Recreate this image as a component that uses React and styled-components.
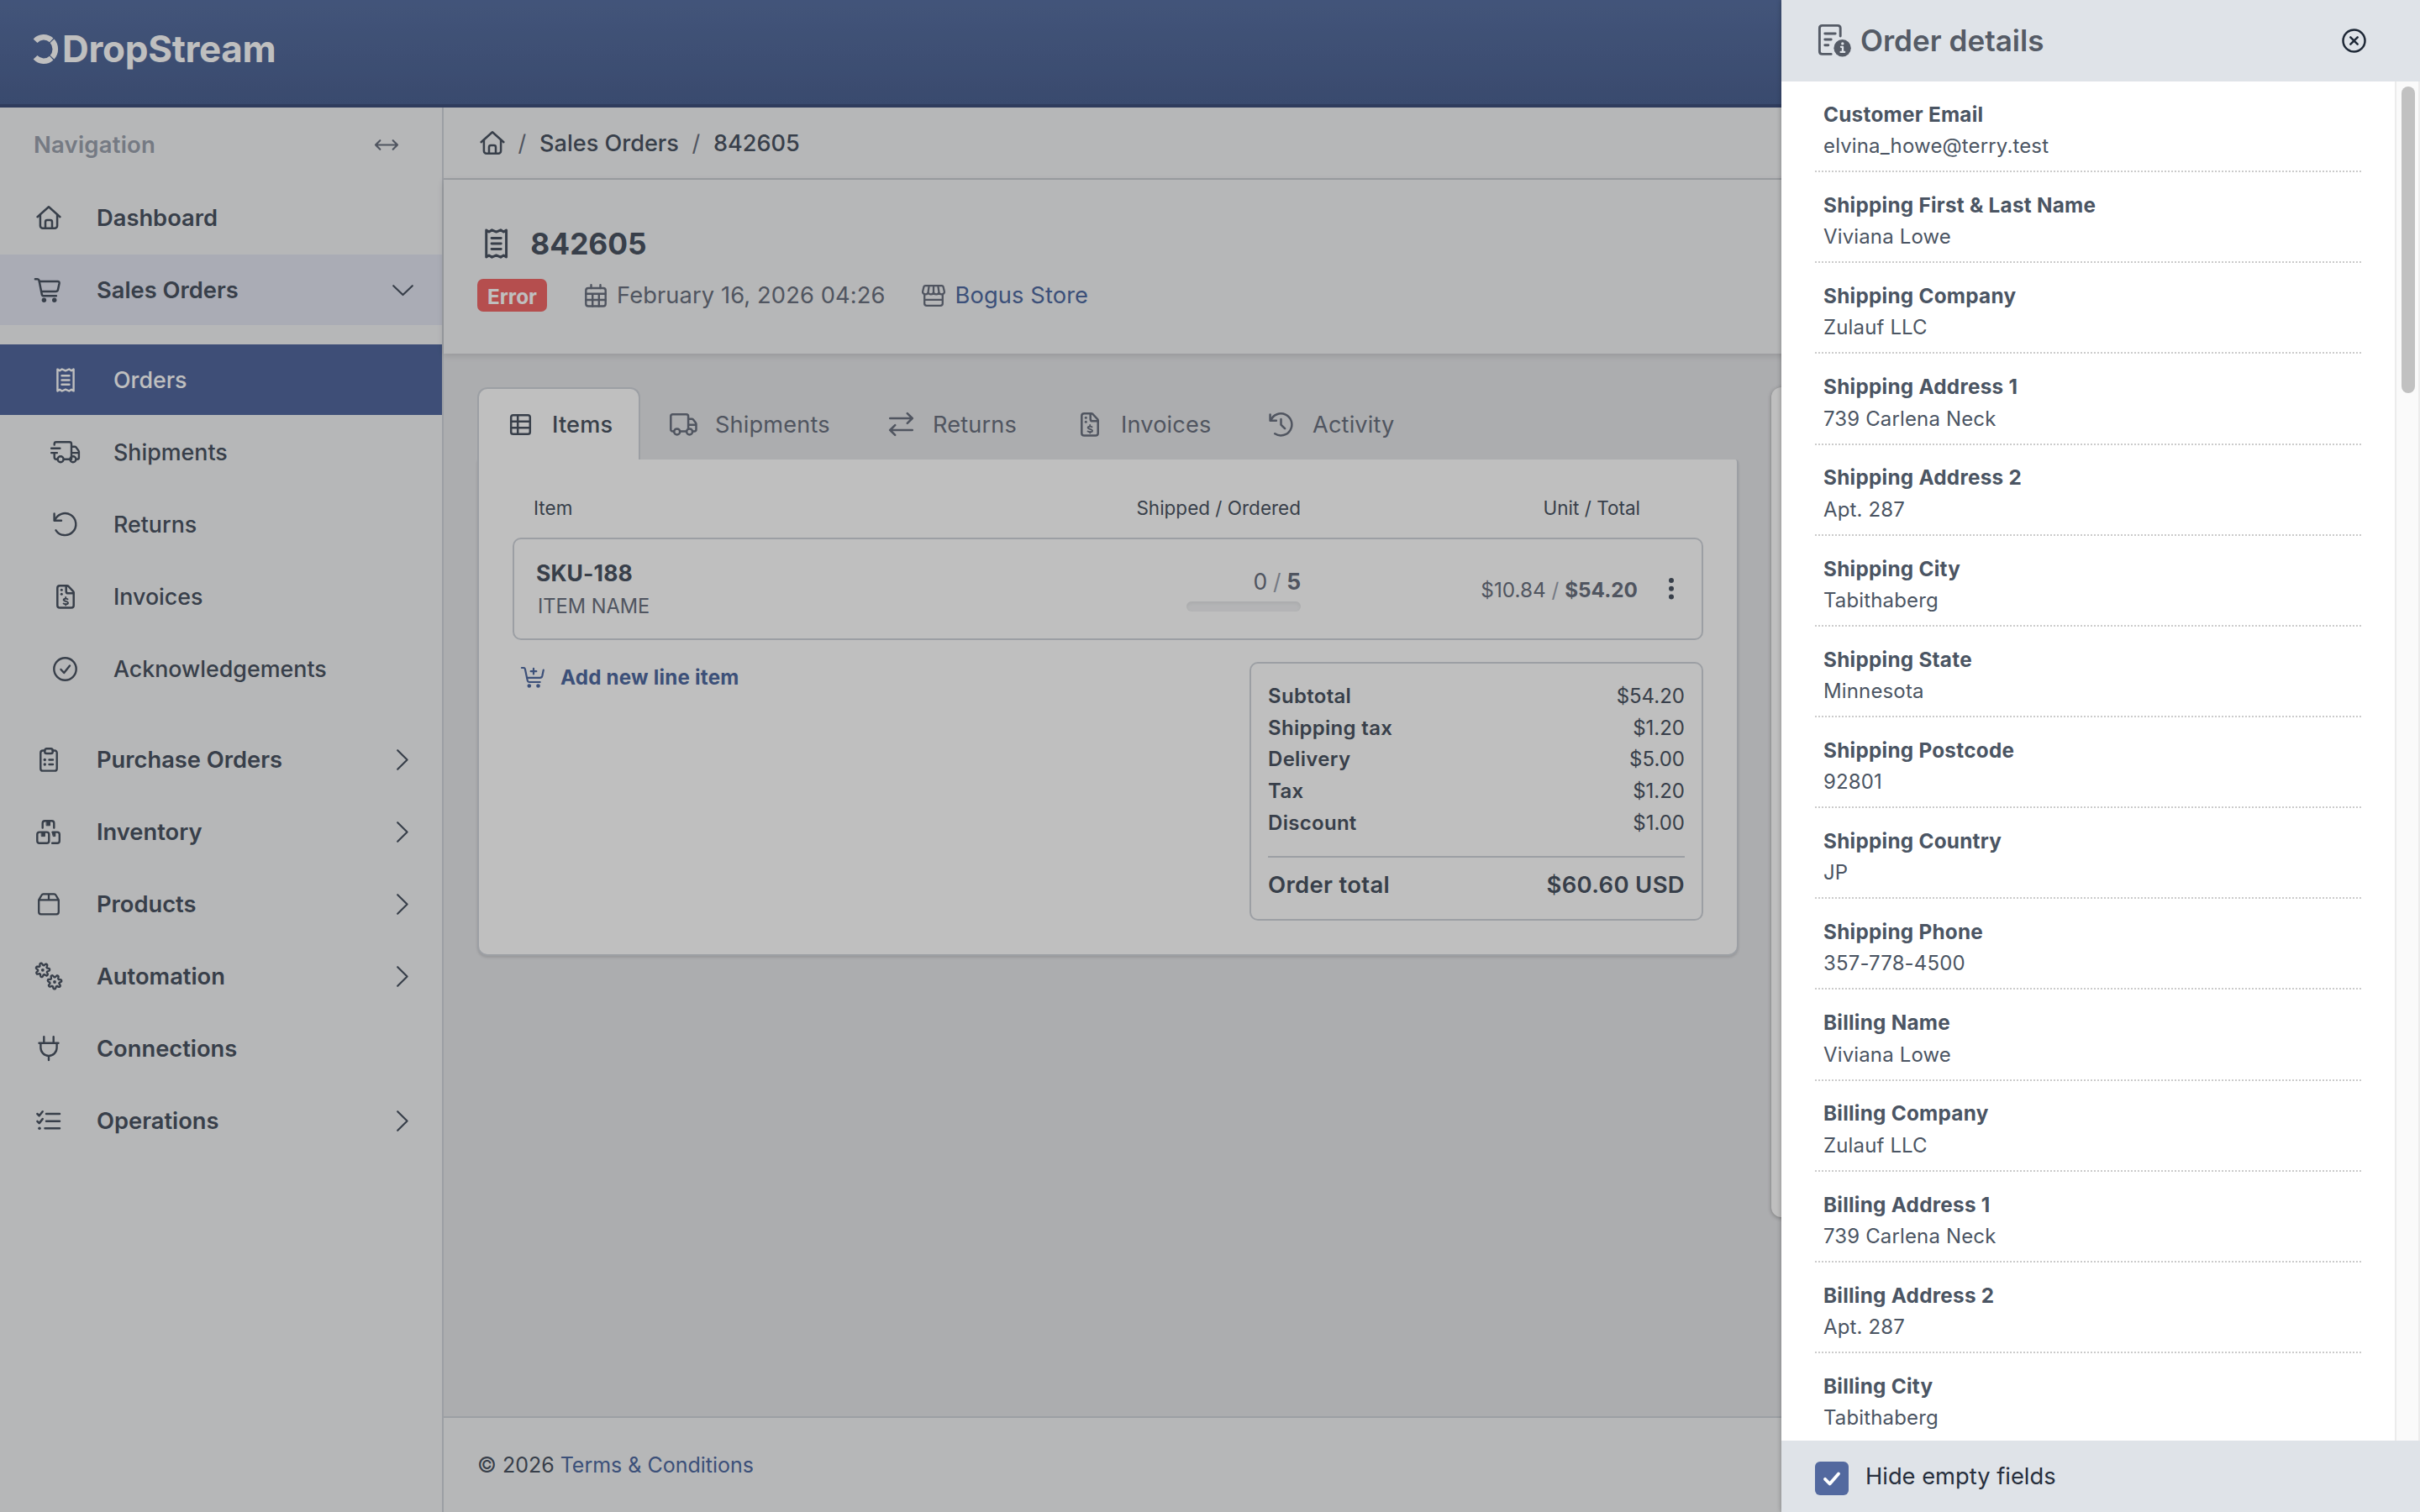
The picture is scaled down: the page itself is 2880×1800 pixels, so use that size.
import React from "react";
import styled, { createGlobalStyle } from "styled-components";

const c = {
  ink: "#4b5563",
  muted: "#6b7280",
  faint: "#9ca3af",
  line: "#d1d5db",
  page: "#e6e7ea",
  surface: "#f3f4f6",
  brand: "#53699f",
  link: "#506ba2",
};

const GlobalStyle = createGlobalStyle`
  *, *::before, *::after { box-sizing: border-box; }
  html, body { margin: 0; padding: 0; }
  body {
    width: 2880px;
    height: 1800px;
    overflow: hidden;
    font-family: Inter, "Liberation Sans", sans-serif;
    color: ${c.ink};
    background: ${c.page};
  }
`;

/* ---------- icons ---------- */

const Svg = styled.svg`
  display: block;
  flex: none;
  overflow: visible;
  fill: none;
  stroke: currentColor;
  stroke-width: ${(p) => p.$stroke || 2.5};
  stroke-linecap: round;
  stroke-linejoin: round;
`;

const Icon = ({ w, h, stroke, children }) => (
  <Svg width={w} height={h} viewBox={`0 0 ${w} ${h}`} $stroke={stroke} aria-hidden="true">
    {children}
  </Svg>
);
const Dot = ({ x, y, r = 1.6 }) => <circle cx={x} cy={y} r={r} fill="currentColor" stroke="none" />;

const HouseIcon = () => (
  <Icon w={30} h={28} stroke={2.5}>
    <path d="M1.6 13.2 15 1.2l13.4 12" />
    <path d="M4.9 10.6v13.2a3 3 0 0 0 3 3h14.2a3 3 0 0 0 3-3V10.6" />
    <path d="M11 26.5v-7.3a2.2 2.2 0 0 1 2.2-2.2h3.6a2.2 2.2 0 0 1 2.2 2.2v7.3" />
  </Icon>
);
const CartIcon = () => (
  <Icon w={33} h={29} stroke={2.5}>
    <path d="M.9 1.2h2.6c1 0 1.8.6 2 1.6l3.3 16.7c.2 1.1 1 1.8 2.1 1.8h15" />
    <path d="M6 4h21.8c1.2 0 2 1 1.8 2.2l-1.6 7.6c-.3 1.5-1.3 2.3-2.8 2.3H8.3" />
    <Dot x={11.4} y={26.3} r={2.7} />
    <Dot x={23.7} y={26.3} r={2.7} />
  </Icon>
);
const CartPlusIcon = () => (
  <Icon w={28} h={25} stroke={2.2}>
    <path d="M.9 1h2.3c.9 0 1.5.5 1.7 1.4l2.9 14c.2 1 .9 1.6 1.9 1.6h13" />
    <path d="M26.8 3.5l-1.5 7.3c-.3 1.3-1.2 2-2.5 2H7" />
    <path d="M15 1.900v6.600M11.700 5.200h6.600" />
    <Dot x={9.8} y={22.5} r={2.3} />
    <Dot x={20.5} y={22.5} r={2.3} />
  </Icon>
);
const ReceiptIcon = ({ h = 29 }) => (
  <Svg width={(h * 22) / 29} height={h} viewBox="0 0 22 29" $stroke={2.4} aria-hidden="true">
    <path d="M1.400 1.600 4 3.200 6.800 1.500 11 3.300l4.200-1.800L18 3.200l2.600-1.600v25.800L18 25.800l-2.800 1.700-4.200-1.800-4.200 1.800L4 25.800l-2.600 1.600z" />
    <path d="M6.500 9.300h9M6.500 14.500h9M6.500 19.700h9" />
  </Svg>
);
const TruckFastIcon = () => (
  <Icon w={36} h={27} stroke={2.4}>
    <path d="M4.700 4.600V3.400c0-1.200.9-2.200 2.200-2.200h15.800c1.300 0 2.300 1 2.300 2.200v18.300M1.100 8.700h10.300M1.100 14.100h6.800M4.700 14.300v5.200c0 1.200.8 2.200 2.400 2.200h1M16.200 21.700H23M25 6.800h3.900c.7 0 1.300.3 1.700.8l2.700 3.600c.4.5.6 1 .6 1.600v6.900c0 1.200-.9 2-2.200 2M25 14.100h8.900" />
    <circle cx="12.100" cy="21.700" r="3.500" />
    <circle cx="26.900" cy="21.700" r="3.500" />
  </Icon>
);
const TruckIcon = () => (
  <Icon w={33} h={27} stroke={2.5}>
    <path d="M4.500 21.500H3.600c-1.300 0-2.300-1-2.300-2.300V3.500c0-1.300 1-2.300 2.300-2.300h16.200c1.300 0 2.300 1 2.300 2.300v14.300M12.800 21.500h6.600M22.100 6.700h4.200c.7 0 1.300.3 1.700.8l2.900 3.700c.4.5.6 1 .6 1.600v6.500c0 1.200-.9 2.200-2.200 2.200h-1.600M22.100 13.800h9.400" />
    <circle cx="8.700" cy="21.900" r="3.500" />
    <circle cx="23.600" cy="21.900" r="3.500" />
  </Icon>
);
const RotateLeftIcon = () => (
  <Icon w={29} h={29} stroke={2.4}>
    <path d="M1.600 1.500v8.300H10" />
    <path d="M2.100 9.600A13 13 0 1 1 3.500 21.300" />
  </Icon>
);
const HistoryIcon = () => (
  <Icon w={29} h={29} stroke={2.5}>
    <path d="M1.600 2.600v7.200h7.300" />
    <path d="M2.300 9.500A13 13 0 1 1 7.200 25.200" />
    <path d="M14.500 8v6.700l4.600 4.500" />
  </Icon>
);
const InvoiceIcon = () => (
  <Icon w={22} h={29} stroke={2.5}>
    <path d="M12.700 1.300H4.200c-1.600 0-2.900 1.200-2.900 2.800v20.700c0 1.600 1.300 2.800 2.900 2.800h13.600c1.600 0 2.900-1.200 2.900-2.800V9.600c0-.7-.3-1.300-.7-1.800L14.500 2c-.5-.5-1.100-.7-1.800-.7z" />
    <path d="M11.700 1.500v6.400c0 1.400 1 2.400 2.400 2.400h6.300" />
    <Dot x={6.3} y={6.3} r={1.5} />
    <Dot x={6.3} y={11.2} r={1.5} />
    <path strokeWidth="1.900" d="M13.500 17.300c-1.500-.9-4.800-1-4.900.8 0 2.200 5.400 1.200 5.400 3.600 0 2-3.600 1.900-5.400.8M11.200 14.900v1.600M11.200 22.900v1.500" />
  </Icon>
);
const CircleCheckIcon = () => (
  <Icon w={29} h={29} stroke={2.4}>
    <circle cx="14.500" cy="14.500" r="13.200" />
    <path d="M9.500 15l3.700 4 6.800-8.600" />
  </Icon>
);
const ClipboardIcon = () => (
  <Icon w={22} h={29} stroke={2.4}>
    <path d="M6.500 3.500H4c-1.600 0-2.700 1.100-2.700 2.700v18.700c0 1.600 1.100 2.700 2.700 2.700h14c1.600 0 2.700-1.100 2.700-2.700V6.200c0-1.600-1.100-2.700-2.700-2.700h-2.500" />
    <rect x="6.200" y="1.200" width="9.600" height="5.800" rx="2.300" />
    <Dot x={6.3} y={14.5} r={1.7} />
    <Dot x={6.3} y={20} r={1.7} />
    <path d="M11.500 14.500H16M11.500 20H16" />
  </Icon>
);
const BoxesIcon = () => (
  <Icon w={29} h={29} stroke={2.4}>
    <path d="M7.700 9.500V4c0-1.600 1-2.700 2.700-2.700h8.200c1.700 0 2.700 1.100 2.700 2.700v5.500" />
    <rect x="1.300" y="14.600" width="14" height="13.200" rx="2.700" />
    <path d="M19.600 14.600h5.500c1.600 0 2.700 1.100 2.700 2.700V25c0 1.600-1.100 2.700-2.700 2.700h-6" />
    <path fill="currentColor" strokeWidth="1" d="M12.500 2h4v4.800h-4zM6.600 15h3.800v4.600H6.600zM19.400 14.600h3.400v5h-2.200z" />
  </Icon>
);
const ProductIcon = () => (
  <Icon w={26} h={27} stroke={2.3}>
    <path d="M1.200 8.300 4.600 2.500c.4-.8 1.100-1.200 2-1.200h12.800c.9 0 1.600.4 2 1.200l3.400 5.800v14.500c0 1.500-1 2.500-2.500 2.500H3.700c-1.500 0-2.500-1-2.500-2.500zM1.200 8.300h23.600M13 1.300v7" />
  </Icon>
);
const gear = (cx, cy, turn) => {
  const pts = [];
  for (let i = 0; i < 72; i += 1) {
    const a = (i / 72) * Math.PI * 2;
    const wave = Math.max(-0.7, Math.min(0.7, Math.cos(7 * a + turn)));
    const r = 7 + wave * 1.9;
    pts.push(`${(cx + r * Math.cos(a)).toFixed(2)} ${(cy + r * Math.sin(a)).toFixed(2)}`);
  }
  return `M${pts.join("L")}Z`;
};
const GearsIcon = () => (
  <Icon w={34} h={34} stroke={2.3}>
    <path d={gear(9.8, 9.8, 0.4)} />
    <path d={gear(24, 24, 1.4)} />
    <Dot x={9.8} y={9.8} r={1.9} />
    <Dot x={24} y={24} r={1.9} />
  </Icon>
);
const PlugIcon = () => (
  <Icon w={26} h={30} stroke={2.4}>
    <path d="M7.300 1.200v7M18.700 1.200v7M1.500 8.800h23M3.400 9v5.300a9.600 9.600 0 0 0 19.200 0V9M13 24v5" />
  </Icon>
);
const ListCheckIcon = () => (
  <Icon w={29} h={24} stroke={2.5}>
    <path d="M1.400 4l2.300 2.300 4-5M1.400 12.800l2.300 2.300 4-5M12 4h16M12 12.700h16M10.500 21.300H28" />
    <Dot x={4} y={21.3} r={1.8} />
  </Icon>
);
const ChevronDownIcon = () => (
  <Icon w={25} h={13} stroke={2.2}>
    <path d="M1.200 1.200 12.500 12 23.800 1.200" />
  </Icon>
);
const ChevronRightIcon = () => (
  <Icon w={14} h={25} stroke={2.2}>
    <path d="M1.200 1.200 12.600 12.500 1.200 23.800" />
  </Icon>
);
const ResizeIcon = () => (
  <Icon w={28} h={13} stroke={2.2}>
    <path d="M1 6.500h26M6.300 1.200 1 6.500l5.300 5.300M21.700 1.200 27 6.500l-5.300 5.300" />
  </Icon>
);
const CalendarIcon = () => (
  <Icon w={26} h={28} stroke={2.4}>
    <rect x="1.300" y="5" width="23.400" height="21.500" rx="2.800" />
    <path d="M7.500 1.200V5M18.500 1.200V5M1.300 11.800h23.400M1.300 19h23.400M9.200 11.800v14.700M16.800 11.800v14.700" />
  </Icon>
);
const StoreIcon = () => (
  <Icon w={28} h={26} stroke={2.3}>
    <path d="M4.200 1.200h19.600c.9 0 1.500.5 1.800 1.300l1.300 5.700c.3 1.600-1.300 3.200-3.300 3.200-1.800 0-3.200-1-3.200-2.600 0 1.600-1.400 2.600-3.200 2.600S14 10.400 14 8.800c0 1.600-1.400 2.600-3.200 2.600S7.600 10.400 7.600 8.800c0 1.600-1.400 2.600-3.200 2.600-2 0-3.600-1.600-3.300-3.200l1.300-5.700c.3-.8.900-1.300 1.800-1.300zM7.600 8.800l1-7.500M14 8.800V1.300M20.400 8.800l-1-7.500" />
    <path d="M3.200 11.500v10.700c0 1.600 1.100 2.600 2.700 2.600h16.200c1.600 0 2.700-1 2.700-2.600V11.500M3.200 17.800h21.600" />
  </Icon>
);
const TableIcon = () => (
  <Icon w={25} h={25} stroke={2.5}>
    <rect x="1.200" y="1.200" width="22.600" height="22.600" rx="2.600" />
    <path d="M1.200 8.700h22.600M1.200 16.300h22.600M9.200 1.200v22.600" />
  </Icon>
);
const SwapIcon = () => (
  <Icon w={29} h={28} stroke={2.5}>
    <path d="M1.200 7h26.600M21.800 1.200 27.800 7l-6 5.800M27.800 21H1.200M7.200 15.200 1.200 21l6 5.800" />
  </Icon>
);
const OrderInfoIcon = () => (
  <Icon w={39} h={39} stroke={2.9}>
    <path d="M26.200 14V4.600c0-1.900-1.300-3.200-3.200-3.200H4.600c-1.900 0-3.200 1.300-3.200 3.200v27.600c0 1.900 1.300 3.200 3.200 3.200h10.600" />
    <path d="M7.800 11h12.400M7.800 18h7.400M7.800 24.700h4" />
    <Dot x={28.6} y={28.3} r={10.2} />
    <g stroke="#dfe3e8" strokeWidth="2.300">
      <path d="M27 26.800h2v6M26.600 32.900h4.600" />
      <circle cx="28.800" cy="22.900" r="1.700" fill="#dfe3e8" stroke="none" />
    </g>
  </Icon>
);
const CloseIcon = () => (
  <Icon w={29} h={29} stroke={2.5}>
    <circle cx="14.500" cy="14.500" r="13" />
    <path d="M10.300 10.300l8.400 8.400M18.700 10.300l-8.400 8.400" />
  </Icon>
);
const KebabIcon = () => (
  <Icon w={6} h={26}>
    <Dot x={3} y={3} r={3} />
    <Dot x={3} y={12.7} r={3} />
    <Dot x={3} y={22.4} r={3} />
  </Icon>
);
const CheckIcon = () => (
  <Icon w={20} h={17} stroke={3.8}>
    <path d="M2 8.800l5.600 5.700L18 2.500" />
  </Icon>
);
const arc = (from, to) => {
  const p = (d) => {
    const a = (d * Math.PI) / 180;
    return `${(12 + 13.8 * Math.cos(a)).toFixed(2)} ${(17.5 + 14.2 * Math.sin(a)).toFixed(2)}`;
  };
  return `M${p(from)}A13.800 14.200 0 0 1 ${p(to)}`;
};
const LogoMark = styled(Svg)`
  stroke-linecap: butt;
`;

/* ---------- shell ---------- */

const Screen = styled.div`
  position: relative;
  width: 2880px;
  height: 1800px;
  overflow: hidden;
  display: grid;
  grid-template-columns: 528px 1fr;
  grid-template-rows: 128px 1fr;
`;
const TopBar = styled.header`
  grid-column: 1 / -1;
  display: flex;
  align-items: flex-start;
  gap: 5px;
  padding: 41px 40px 0;
  color: #fff;
  background: linear-gradient(#5971a3, #4d6393);
  border-bottom: 4px solid #3f517c;
`;
const LogoText = styled.span`
  font-size: 44px;
  line-height: 34px;
  font-weight: 700;
  letter-spacing: -0.3px;
`;

/* ---------- sidebar ---------- */

const Sidebar = styled.nav`
  display: flex;
  flex-direction: column;
  background: ${c.surface};
  border-right: 2px solid ${c.line};
`;
const SidebarHead = styled.div`
  display: flex;
  align-items: center;
  justify-content: space-between;
  height: 89px;
  padding: 0 52px 0 40px;
  color: ${c.muted};
`;
const SidebarTitle = styled.span`
  padding-bottom: 2px;
  font-size: 27.5px;
  font-weight: 600;
  letter-spacing: 0.2px;
  color: ${c.faint};
`;
const NavRow = styled.a`
  display: flex;
  align-items: center;
  height: 84px;
  margin-bottom: 2px;
  padding-right: 33px;
  font-size: 27.3px;
  font-weight: 600;
  background: ${(p) => (p.$open ? "#e3e6f2" : "transparent")};
`;
const NavIcon = styled.span`
  display: flex;
  justify-content: center;
  align-items: center;
  width: 115px;
`;
const NavLabel = styled.span`
  flex: 1;
`;
const Chevron = styled.span`
  display: flex;
  justify-content: center;
  width: 28px;
`;
const SubNav = styled.div`
  display: flex;
  flex-direction: column;
  gap: 2px;
  padding: 21px 0 24px;
`;
const SubRow = styled.a`
  display: flex;
  align-items: center;
  height: 84px;
  font-size: 26.8px;
  font-weight: 500;
  color: ${(p) => (p.$active ? "#fff" : c.ink)};
  background: ${(p) => (p.$active ? c.brand : "transparent")};
`;
const SubIcon = styled.span`
  display: flex;
  justify-content: center;
  width: 115px;
  margin: 0 0 0 20px;
`;

/* ---------- main ---------- */

const Main = styled.main`
  display: flex;
  flex-direction: column;
  min-width: 0;
`;
const Breadcrumb = styled.div`
  display: flex;
  align-items: center;
  height: 86px;
  padding-left: 43px;
  font-size: 27.1px;
  font-weight: 500;
  background: ${c.surface};
  border-bottom: 2px solid ${c.line};
`;
const Slash = styled.span`
  width: 41px;
  text-align: center;
  font-weight: 400;
  color: ${c.muted};
`;
const PageHead = styled.div`
  display: flex;
  flex-direction: column;
  height: 207px;
  padding: 53px 0 0 40px;
  background: ${c.surface};
  box-shadow: 0 2px 8px rgba(0, 0, 0, 0.14);
`;
const TitleRow = styled.div`
  display: flex;
  align-items: center;
  gap: 27px;
  height: 46px;
  padding-left: 9px;
`;
const Title = styled.h1`
  margin: 0;
  font-size: 35.3px;
  font-weight: 700;
`;
const MetaRow = styled.div`
  display: flex;
  align-items: center;
  height: 39px;
  margin-top: 19px;
  font-size: 27.3px;
  font-weight: 400;
  letter-spacing: 0.1px;
  color: ${c.muted};
`;
const Badge = styled.span`
  display: flex;
  align-items: center;
  justify-content: center;
  width: 83px;
  height: 39px;
  padding-top: 2px;
  border-radius: 7px;
  font-size: 24.3px;
  font-weight: 700;
  letter-spacing: 0;
  color: #fff;
  background: #f26868;
`;
const Meta = styled.span`
  display: flex;
  align-items: center;
  gap: 12px;
  margin-left: ${(p) => p.$gap}px;
`;
const StoreLink = styled.a`
  color: ${c.link};
`;
const Content = styled.div`
  display: flex;
  flex: 1;
  gap: 39px;
  padding: 40px 0 0 40px;
`;
const OrderPanel = styled.section`
  width: 1501px;
`;
const Tabs = styled.div`
  display: flex;
  height: 86px;
`;
const Tab = styled.button`
  display: flex;
  align-items: center;
  width: ${(p) => p.$w}px;
  height: 86px;
  padding: 0 0 0 32px;
  border: 2px solid ${(p) => (p.$active ? c.line : "transparent")};
  border-bottom: 0;
  border-radius: 12px 12px 0 0;
  font: ${(p) => (p.$active ? 500 : 400)} 27.2px Inter, "Liberation Sans", sans-serif;
  letter-spacing: 0.15px;
  color: ${(p) => (p.$active ? c.ink : c.muted)};
  background: ${(p) => (p.$active ? "#fff" : "transparent")};
`;
const TabIcon = styled.span`
  display: flex;
  justify-content: center;
  width: 35px;
  margin-right: 20px;
`;
const Card = styled.div`
  display: flex;
  flex-direction: column;
  height: 591px;
  padding: 45px 40px 0;
  border: 2px solid ${c.line};
  border-top: 0;
  border-radius: 0 4px 12px 12px;
  background: #fff;
  box-shadow: 0 2px 3px rgba(0, 0, 0, 0.12);
`;
const ItemsHead = styled.div`
  display: grid;
  grid-template-columns: 1fr 300px 404px;
  padding: 0 75px 0 25px;
  margin-bottom: 22px;
  font-size: 22.5px;
  line-height: 26px;
  font-weight: 400;
`;
const Cell = styled.div`
  text-align: ${(p) => (p.$right ? "right" : "left")};
`;
const ItemRow = styled.div`
  display: grid;
  grid-template-columns: 1fr 300px 401px 76px;
  height: 122px;
  padding-left: 26px;
  border: 2px solid ${c.line};
  border-radius: 10px;
`;
const ItemInfo = styled.div`
  display: flex;
  flex-direction: column;
  padding-top: 21px;
`;
const Sku = styled.span`
  font-size: 26.5px;
  line-height: 38px;
  font-weight: 700;
  letter-spacing: 0.1px;
`;
const ItemName = styled.span`
  padding-left: 2px;
  font-size: 23.6px;
  line-height: 42px;
  color: ${c.muted};
`;
const Shipped = styled.div`
  display: flex;
  flex-direction: column;
  align-items: flex-end;
  padding-top: 32px;
  font-size: 26.5px;
  line-height: 36px;
  letter-spacing: -0.3px;
  color: ${c.muted};
`;
const Sep = styled.span`
  color: ${c.faint};
`;
const Progress = styled.div`
  width: 136px;
  height: 12px;
  margin-top: 6px;
  border-radius: 6px;
  background: #f0f1f3;
  box-shadow: inset 0 2px 4px rgba(0, 0, 0, 0.06);
`;
const Price = styled.div`
  padding-top: 45px;
  text-align: right;
  font-size: 24.3px;
  line-height: 30px;
  color: ${c.muted};
`;
const RowMenu = styled.div`
  display: flex;
  justify-content: center;
  padding: 46px 0 0 3px;
`;
const CardBottom = styled.div`
  display: flex;
  justify-content: space-between;
  align-items: flex-start;
  margin-top: 26px;
`;
const AddLink = styled.a`
  display: flex;
  align-items: center;
  gap: 19px;
  height: 36px;
  padding-left: 10px;
  font-size: 24.2px;
  font-weight: 700;
  letter-spacing: 0.2px;
  color: ${c.link};
`;
const Summary = styled.div`
  width: 540px;
  height: 308px;
  padding: 20px 20px 0;
  border: 2px solid ${c.line};
  border-radius: 10px;
`;
const SummaryRow = styled.div`
  display: flex;
  justify-content: space-between;
  font-size: 24px;
  line-height: 37.7px;
`;
const SummaryLabel = styled.span`
  font-weight: 600;
  letter-spacing: 0.3px;
`;
const TotalRow = styled.div`
  display: flex;
  justify-content: space-between;
  margin-top: 20px;
  border-top: 2px solid ${c.line};
  font-size: 27.5px;
  line-height: 64px;
  font-weight: 600;
  letter-spacing: 0.3px;
`;
const SideCard = styled.div`
  flex: 1;
  height: 988px;
  border-radius: 12px;
  background: #fff;
  box-shadow: 0 1px 5px rgba(0, 0, 0, 0.3);
`;
const Footer = styled.footer`
  display: flex;
  align-items: center;
  gap: 7px;
  height: 114px;
  padding: 0 0 0 40px;
  border-top: 2px solid ${c.line};
  font-size: 25px;
  background: ${c.surface};
`;

/* ---------- drawer ---------- */

const Scrim = styled.div`
  position: absolute;
  inset: 0;
  background: rgba(0, 0, 0, 0.25);
`;
const Drawer = styled.aside`
  position: absolute;
  top: 0;
  right: 0;
  bottom: 0;
  width: 760px;
  display: grid;
  grid-template-rows: 97px 1fr 85px;
  background: #fff;
  box-shadow: -1px 0 5px rgba(0, 0, 0, 0.22);
`;
const DrawerHead = styled.div`
  display: flex;
  align-items: center;
  padding: 0 64px 1px 44px;
  color: #555b66;
  background: #dfe3e8;
`;
const DrawerTitle = styled.h2`
  flex: 1;
  margin: 0 0 0 11px;
  font-size: 35.1px;
  font-weight: 600;
`;
const CloseButton = styled.button`
  padding: 0;
  border: 0;
  color: #1f2937;
  background: none;
`;
const DrawerBody = styled.div`
  display: grid;
  grid-template-columns: 1fr 30px;
  min-height: 0;
  overflow: hidden;
`;
const Fields = styled.div`
  padding: 0 40px;
`;
const Field = styled.div`
  height: 108.15px;
  padding: 19.9px 0 0 10px;
  border-bottom: 2px dotted #cbcbcb;
  font-size: 24px;
  line-height: 38.2px;
`;
const FieldLabel = styled.div`
  font-weight: 700;
  font-size: 24.3px;
  letter-spacing: 0.26px;
`;
const FieldValue = styled.div`
  letter-spacing: 0.14px;
`;
const ScrollTrack = styled.div`
  padding: 6px;
  border: 0 solid #ececec;
  border-width: 0 2px;
  background: #fafafa;
`;
const ScrollThumb = styled.div`
  width: 16px;
  height: 365px;
  border-radius: 8px;
  background: #c1c1c1;
`;
const DrawerFoot = styled.label`
  display: flex;
  align-items: flex-start;
  padding: 25px 0 0 40px;
  color: #272f3d;
  background: #dfe3e8;
`;
const Checkbox = styled.span`
  display: flex;
  align-items: center;
  justify-content: center;
  width: 40px;
  height: 40px;
  border-radius: 6px;
  color: #fff;
  background: ${c.brand};
`;
const CheckLabel = styled.span`
  margin-left: 20px;
  font-size: 27.3px;
  line-height: 35px;
`;

/* ---------- data ---------- */

const subNav = [
  { label: "Orders", icon: <ReceiptIcon />, active: true },
  { label: "Shipments", icon: <TruckFastIcon /> },
  { label: "Returns", icon: <RotateLeftIcon /> },
  { label: "Invoices", icon: <InvoiceIcon /> },
  { label: "Acknowledgements", icon: <CircleCheckIcon /> },
];
const lowerNav = [
  { label: "Purchase Orders", icon: <ClipboardIcon />, more: true },
  { label: "Inventory", icon: <BoxesIcon />, more: true },
  { label: "Products", icon: <ProductIcon />, more: true },
  { label: "Automation", icon: <GearsIcon />, more: true },
  { label: "Connections", icon: <PlugIcon /> },
  { label: "Operations", icon: <ListCheckIcon />, more: true },
];
const tabs = [
  { label: "Items", icon: <TableIcon />, w: 194, active: true },
  { label: "Shipments", icon: <TruckIcon />, w: 259 },
  { label: "Returns", icon: <SwapIcon />, w: 224 },
  { label: "Invoices", icon: <InvoiceIcon />, w: 228 },
  { label: "Activity", icon: <HistoryIcon />, w: 220 },
];
const charges = [
  ["Subtotal", "$54.20"],
  ["Shipping tax", "$1.20"],
  ["Delivery", "$5.00"],
  ["Tax", "$1.20"],
  ["Discount", "$1.00"],
];
const fields = [
  ["Customer Email", "elvina_howe@terry.test"],
  ["Shipping First & Last Name", "Viviana Lowe"],
  ["Shipping Company", "Zulauf LLC"],
  ["Shipping Address 1", "739 Carlena Neck"],
  ["Shipping Address 2", "Apt. 287"],
  ["Shipping City", "Tabithaberg"],
  ["Shipping State", "Minnesota"],
  ["Shipping Postcode", "92801"],
  ["Shipping Country", "JP"],
  ["Shipping Phone", "357-778-4500"],
  ["Billing Name", "Viviana Lowe"],
  ["Billing Company", "Zulauf LLC"],
  ["Billing Address 1", "739 Carlena Neck"],
  ["Billing Address 2", "Apt. 287"],
  ["Billing City", "Tabithaberg"],
];

const NavItem = ({ icon, label, more, open }) => (
  <NavRow $open={open}>
    <NavIcon>{icon}</NavIcon>
    <NavLabel>{label}</NavLabel>
    {(more || open) && <Chevron>{open ? <ChevronDownIcon /> : <ChevronRightIcon />}</Chevron>}
  </NavRow>
);

export default function App() {
  return (
    <>
      <GlobalStyle />
      <Screen>
        <TopBar>
          <LogoMark width={29} height={35} viewBox="0 0 29 35" $stroke={6.6} aria-hidden="true">
            <path d={arc(-136, -48)} />
            <path d={arc(-43, 43)} />
            <path d={arc(48, 136)} />
          </LogoMark>
          <LogoText>DropStream</LogoText>
        </TopBar>

        <Sidebar>
          <SidebarHead>
            <SidebarTitle>Navigation</SidebarTitle>
            <ResizeIcon />
          </SidebarHead>
          <NavItem icon={<HouseIcon />} label="Dashboard" />
          <NavItem icon={<CartIcon />} label="Sales Orders" open />
          <SubNav>
            {subNav.map((s) => (
              <SubRow key={s.label} $active={s.active}>
                <SubIcon>{s.icon}</SubIcon>
                {s.label}
              </SubRow>
            ))}
          </SubNav>
          {lowerNav.map((n) => (
            <NavItem key={n.label} {...n} />
          ))}
        </Sidebar>

        <Main>
          <Breadcrumb>
            <HouseIcon />
            <Slash>/</Slash>
            <span>Sales Orders</span>
            <Slash>/</Slash>
            <span>842605</span>
          </Breadcrumb>
          <PageHead>
            <TitleRow>
              <ReceiptIcon h={36} />
              <Title>842605</Title>
            </TitleRow>
            <MetaRow>
              <Badge>Error</Badge>
              <Meta $gap={45}>
                <CalendarIcon />
                <span>February 16, 2026 04:26</span>
              </Meta>
              <Meta $gap={43}>
                <StoreIcon />
                <StoreLink>Bogus Store</StoreLink>
              </Meta>
            </MetaRow>
          </PageHead>

          <Content>
            <OrderPanel>
              <Tabs>
                {tabs.map((t) => (
                  <Tab key={t.label} $w={t.w} $active={t.active}>
                    <TabIcon>{t.icon}</TabIcon>
                    {t.label}
                  </Tab>
                ))}
              </Tabs>
              <Card>
                <ItemsHead>
                  <Cell>Item</Cell>
                  <Cell $right>Shipped / Ordered</Cell>
                  <Cell $right>Unit / Total</Cell>
                </ItemsHead>
                <ItemRow>
                  <ItemInfo>
                    <Sku>SKU-188</Sku>
                    <ItemName>ITEM NAME</ItemName>
                  </ItemInfo>
                  <Shipped>
                    <div>
                      0 <Sep>/</Sep> <b>5</b>
                    </div>
                    <Progress />
                  </Shipped>
                  <Price>
                    $10.84 <Sep>/</Sep> <b>$54.20</b>
                  </Price>
                  <RowMenu>
                    <KebabIcon />
                  </RowMenu>
                </ItemRow>
                <CardBottom>
                  <AddLink>
                    <CartPlusIcon />
                    Add new line item
                  </AddLink>
                  <Summary>
                    {charges.map(([label, amount]) => (
                      <SummaryRow key={label}>
                        <SummaryLabel>{label}</SummaryLabel>
                        <span>{amount}</span>
                      </SummaryRow>
                    ))}
                    <TotalRow>
                      <span>Order total</span>
                      <span>$60.60 USD</span>
                    </TotalRow>
                  </Summary>
                </CardBottom>
              </Card>
            </OrderPanel>
            <SideCard />
          </Content>

          <Footer>
            <span>© 2026</span>
            <StoreLink>Terms & Conditions</StoreLink>
          </Footer>
        </Main>

        <Scrim />
        <Drawer>
          <DrawerHead>
            <OrderInfoIcon />
            <DrawerTitle>Order details</DrawerTitle>
            <CloseButton aria-label="Close">
              <CloseIcon />
            </CloseButton>
          </DrawerHead>
          <DrawerBody>
            <Fields>
              {fields.map(([label, value]) => (
                <Field key={label}>
                  <FieldLabel>{label}</FieldLabel>
                  <FieldValue>{value}</FieldValue>
                </Field>
              ))}
            </Fields>
            <ScrollTrack>
              <ScrollThumb />
            </ScrollTrack>
          </DrawerBody>
          <DrawerFoot>
            <Checkbox>
              <CheckIcon />
            </Checkbox>
            <CheckLabel>Hide empty fields</CheckLabel>
          </DrawerFoot>
        </Drawer>
      </Screen>
    </>
  );
}
